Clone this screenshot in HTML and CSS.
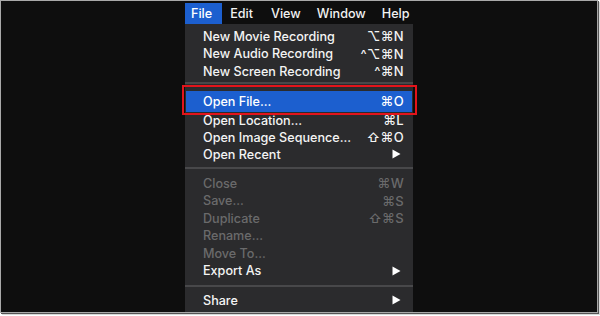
FILE: index.html
```html
<!DOCTYPE html>
<html>
<head>
<meta charset="utf-8">
<link rel="stylesheet" href="styles.css">
</head>
<body>
<div class="frame">
  <div class="menu">
    <div class="menubar">
      <span class="mb-item active">File</span>
      <span class="mb-item edit">Edit</span>
      <span class="mb-item view">View</span>
      <span class="mb-item window">Window</span>
      <span class="mb-item help">Help</span>
    </div>
    <div class="dropdown">
      <div class="row"><span class="label">New Movie Recording</span><span class="key">⌥⌘N</span></div>
      <div class="row"><span class="label">New Audio Recording</span><span class="key">^⌥⌘N</span></div>
      <div class="row"><span class="label">New Screen Recording</span><span class="key">^⌘N</span></div>
      <div class="sep s1"></div>
      <div class="row hl"><span class="label">Open File...</span><span class="key">⌘O</span></div>
      <div class="row r17"><span class="label">Open Location...</span><span class="key">⌘L</span></div>
      <div class="row r17"><span class="label">Open Image Sequence...</span><span class="key">⇧⌘O</span></div>
      <div class="row r17"><span class="label">Open Recent</span><svg class="arrow" width="9" height="10" viewBox="0 0 9 10"><path d="M0.5 0.5 L8.5 5 L0.5 9.5 Z" fill="#fff"/></svg></div>
      <div class="sep s2"></div>
      <div class="row dis"><span class="label">Close</span><span class="key">⌘W</span></div>
      <div class="row dis"><span class="label">Save...</span><span class="key">⌘S</span></div>
      <div class="row dis"><span class="label">Duplicate</span><span class="key">⇧⌘S</span></div>
      <div class="row dis"><span class="label">Rename...</span></div>
      <div class="row dis"><span class="label">Move To...</span></div>
      <div class="row"><span class="label">Export As</span><svg class="arrow" width="9" height="10" viewBox="0 0 9 10"><path d="M0.5 0.5 L8.5 5 L0.5 9.5 Z" fill="#fff"/></svg></div>
      <div class="sep s3"></div>
      <div class="row"><span class="label">Share</span><svg class="arrow" width="9" height="10" viewBox="0 0 9 10"><path d="M0.5 0.5 L8.5 5 L0.5 9.5 Z" fill="#fff"/></svg></div>
    </div>
    <div class="annot"></div>
  </div>
</div>
</body>
</html>
```
FILE: styles.css
```css
* { box-sizing: border-box; }
html, body { margin: 0; padding: 0; }
body {
  background: #ffffff;
  width: 600px;
  height: 316px;
  font-family: "Inter", "DejaVu Sans", sans-serif;
}
.frame {
  width: 598px;
  height: 313px;
  border: 1px solid #a9a9a9;
  background: #0e0e0e;
  box-shadow: 1px 1px 0 #555, 2px 2px 0 #d8d8d8;
  display: flex;
  flex-direction: column;
  align-items: center;
}
.menu {
  position: relative;
  width: 228px;
  display: flex;
  flex-direction: column;
  flex: 1;
  margin-top: 2px;
}
.menubar {
  height: 21px;
  display: flex;
  align-items: center;
  color: #f2f2f2;
  font-size: 12.6px;
  font-weight: 500;
}
.mb-item {
  height: 21px;
  line-height: 21px;
}
.mb-item.active {
  background: #1c5fcf;
  color: #ffffff;
  padding: 0 10px 0 6px;
}
.edit { margin-left: 8px; }
.view { margin-left: 18px; }
.window { margin-left: 16px; }
.help { margin-left: 16px; }
.dropdown {
  flex: 1;
  background: #2b2b2d;
  padding-top: 3.25px;
  display: flex;
  flex-direction: column;
}
.row {
  height: 17.5px;
  display: flex;
  align-items: center;
  justify-content: space-between;
  padding: 0 9px 0 18px;
  color: #f4f4f4;
  font-size: 12.6px;
  font-weight: 500;
  white-space: nowrap;
}
.row.r17 { height: 17px; }
.row.hl {
  height: 21px;
  background: #1c5fcf;
  color: #ffffff;
  margin: 0 1px;
  padding: 0 8px 0 17px;
}
.row.dis { color: #6a6a6b; }
.key {
  font-size: 13px;
  letter-spacing: 0.3px;
}
.arrow { margin-right: 3px; }
.sep {
  flex: none;
  position: relative;
}
.sep::before {
  content: "";
  position: absolute;
  left: 0;
  right: 0;
  height: 2px;
  background: #48484a;
}
.s1 { height: 10.75px; }
.s1::before { top: 2.25px; }
.s2 { height: 11.75px; }
.s2::before { top: 4.5px; }
.s3 { height: 12px; }
.s3::before { top: 5.5px; }
.annot {
  position: absolute;
  left: -3px;
  top: 82px;
  width: 235px;
  height: 30px;
  border: 2px solid #e3141b;
}
```
